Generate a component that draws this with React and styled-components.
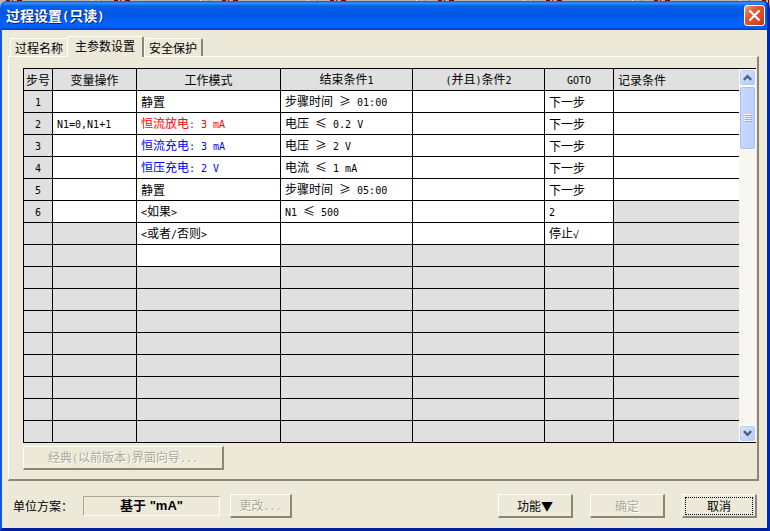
import React from 'react';
import styled, { createGlobalStyle } from 'styled-components';

const GlobalStyle = createGlobalStyle`
  * {
    box-sizing: border-box;
  }

  body {
    margin: 0;
    font-family: 'Noto Sans CJK SC', sans-serif;
    font-size: 12px;
    line-height: 16px;
    color: #000;
  }

  button {
    font: inherit;
    color: inherit;
  }
`;

// The window behind the dialog, only a sliver of it shows
const Desktop = styled.div`
  display: flex;
  flex-direction: column;
  min-height: 100vh;
  padding-top: 1px;
  background: repeating-linear-gradient(
    90deg,
    #b9b9b1 0 6px,
    #800000 6px 10px,
    #b9b9b1 10px 12px,
    #800000 12px 13px,
    #b9b9b1 13px 17px,
    #800000 17px 22px,
    #b9b9b1 22px 92px,
    #fff 92px 93px,
    #b9b9b1 93px 101px,
    #808080 101px 102px,
    #b9b9b1 102px 108px
  );
`;

const Dialog = styled.main`
  flex: 1;
  display: flex;
  flex-direction: column;
  border: solid #0a58ee;
  border-width: 0 3px 3px 2px;
  border-right-color: #0028b8;
  border-bottom-color: #001ea0;
  border-radius: 7px 7px 0 0;
  background: #0050dc;
`;

const TitleBar = styled.header`
  display: flex;
  align-items: center;
  justify-content: space-between;
  height: 29px;
  padding: 0 2px 0 4px;
  border-radius: 6px 6px 0 0;
  background: linear-gradient(#0a50d0 0%, #3a90ff 7%, #0560ee 17%, #0054e2 45%, #0064ff 75%, #0060f5 90%, #003cc4 100%);
`;

const Title = styled.h1`
  margin: 0;
  font-size: 14px;
  line-height: 20px;
  font-weight: bold;
  color: #fff;
  text-shadow: 1px 1px #0a246a;
`;

const CloseButton = styled.button`
  display: flex;
  align-items: center;
  justify-content: center;
  width: 21px;
  height: 21px;
  padding: 0;
  border: 1px solid #fff;
  border-radius: 3px;
  background: linear-gradient(135deg, #f0a088 0%, #e25a34 35%, #d8421a 80%, #b83010 100%);
`;

const Body = styled.div`
  flex: 1;
  display: flex;
  flex-direction: column;
  padding: 5px 8px 10px 6px;
  background: #ece9d8;
`;

const TabList = styled.div`
  position: relative;
  z-index: 1;
  display: flex;
  align-items: flex-end;
  height: 21px;
  padding-left: 2px;
`;

const Tab = styled.button`
  height: ${props => (props.$active ? 21 : 18)}px;
  padding: ${props => (props.$active ? '0 7px 3px' : '0 4px')};
  margin-bottom: ${props => (props.$active ? -1 : 0)}px;
  border: solid #fff;
  border-width: 1px 0 0 1px;
  border-right: ${props => (props.$edge ? '2px solid #8a8776' : '0')};
  border-radius: 2px 2px 0 0;
  background: #ece9d8;
`;

const TabPanel = styled.section`
  flex: 1;
  display: flex;
  flex-direction: column;
  align-items: flex-start;
  padding: 11px 1px 8px 14px;
  border: 1px solid #fff;
  border-right: 2px solid #8a8776;
  border-bottom: 2px solid #8a8776;
`;

const GridFrame = styled.div`
  display: flex;
  width: 100%;
  border: solid #000;
  border-width: 1px 0 1px 1px;
`;

const Grid = styled.table`
  flex: 1;
  width: 100%;
  table-layout: fixed;
  border-collapse: separate;
  border-spacing: 0;
`;

const Cell = styled.td`
  height: 22px;
  padding: 0 4px;
  border: solid #000;
  border-width: 0 1px 1px 0;
  background: ${props => (props.$off ? '#e0e0e0' : '#fff')};
  color: ${props => props.$color || '#000'};
  text-align: ${props => props.$align || 'left'};
  font-weight: normal;
  white-space: nowrap;

  &:last-child {
    border-right: 0;
  }

  tbody > tr:last-child > & {
    height: 21px;
    border-bottom: 0;
  }
`;

const HeadCell = styled(Cell)`
  padding: 0 ${props => (props.$align === 'center' ? 0 : 4)}px;
`;

const Latin = styled.span`
  font-family: 'DejaVu Sans Mono', monospace;
  font-size: ${props => props.$size || 10}px;
`;

const Sign = styled.span`
  display: inline-block;
  width: 12px;
  text-align: center;
`;

const ScrollBar = styled.div`
  display: flex;
  flex-direction: column;
  width: 17px;
  background: #f7f6f0;
`;

const ScrollButton = styled.button`
  display: flex;
  align-items: center;
  justify-content: center;
  width: 17px;
  height: 17px;
  padding: 0;
  border: 1px solid #fff;
  border-radius: 3px;
  background: linear-gradient(135deg, #dce6ff, #b4c8f6);
  box-shadow: inset 0 0 0 1px #b8cbf6;
`;

const ScrollTrack = styled.div`
  flex: 1;
`;

const ScrollThumb = styled.div`
  display: flex;
  align-items: center;
  justify-content: center;
  height: 64px;
  border: 1px solid #fff;
  border-radius: 3px;
  background: linear-gradient(90deg, #cbdafe, #bacffb);
  box-shadow: inset 0 0 0 1px #a8bff0;
`;

const PushButton = styled.button`
  width: ${props => props.$width}px;
  height: 24px;
  padding: 0;
  border: solid #fff;
  border-width: 1px 2px 2px 1px;
  border-right-color: #8a8776;
  border-bottom-color: #8a8776;
  background: #ece9d8;

  &:disabled {
    color: #aca899;
    text-shadow: 1px 1px #fff;
  }
`;

const FocusRing = styled.span`
  display: block;
  margin: 1px 2px;
  border: 1px dotted #000;
`;

const WizardButton = styled(PushButton)`
  margin-top: 3px;
`;

const Footer = styled.footer`
  display: flex;
  align-items: center;
  height: 24px;
  margin-top: 13px;
  padding: 0 2px 0 5px;
`;

const UnitLabel = styled.span`
  width: 70px;
`;

const UnitValue = styled.output`
  width: 137px;
  height: 20px;
  margin-right: 10px;
  border: 1px solid #aca899;
  border-right-color: #fff;
  border-bottom-color: #fff;
  font-family: 'Liberation Sans', 'Noto Sans CJK SC', sans-serif;
  font-size: 13px;
  line-height: 18px;
  font-weight: bold;
  text-align: center;
`;

const Actions = styled.div`
  display: flex;
  gap: 17px;
  margin-left: auto;
`;

const columns = [
  { label: '步号', width: 29 },
  { label: '变量操作', width: 84 },
  { label: '工作模式', width: 144 },
  { label: '结束条件1', width: 132 },
  { label: '(并且)条件2', width: 132 },
  { label: 'GOTO', width: 69 },
  { label: '记录条件', align: 'left' },
];

// off: indexes of the columns that cannot be edited in this row
const rows = [
  { cells: ['1', '', '静置', '步骤时间 ≥ 01:00', '', '下一步', ''] },
  { cells: ['2', 'N1=0,N1+1', '恒流放电: 3 mA', '电压 ≤ 0.2 V', '', '下一步', ''], color: '#f00' },
  { cells: ['3', '', '恒流充电: 3 mA', '电压 ≥ 2 V', '', '下一步', ''], color: '#00f' },
  { cells: ['4', '', '恒压充电: 2 V', '电流 ≤ 1 mA', '', '下一步', ''], color: '#00f' },
  { cells: ['5', '', '静置', '步骤时间 ≥ 05:00', '', '下一步', ''] },
  { cells: ['6', '', '<如果>', 'N1 ≤ 500', '', '2', ''], off: [6] },
  { cells: ['', '', '<或者/否则>', '', '', '停止√', ''], off: [1, 6] },
  { cells: ['', '', '', '', '', '', ''], off: [1, 3, 4, 5, 6] },
];

const emptyRow = { cells: ['', '', '', '', '', '', ''], off: [1, 2, 3, 4, 5, 6] };
const allRows = [...rows, ...Array(8).fill(emptyRow)];

// Latin runs take half the width of a Chinese character, signs the full width
const mixed = (text, size) =>
  text.split(/([≥≤]|[√\x20-\x7e]+)/).map((part, i) => {
    if (/^[≥≤]$/.test(part)) return <Sign key={i}>{part}</Sign>;
    if (/^[√\x20-\x7e]+$/.test(part)) return <Latin key={i} $size={size}>{part}</Latin>;
    return part;
  });

const Chevron = ({ down }) => (
  <svg width="9" height="7" viewBox="0 0 9 7" aria-hidden="true">
    <path d={down ? 'M.8 1.2l3.7 3.7 3.7-3.7' : 'M.8 5.8l3.7-3.7 3.7 3.7'} fill="none" stroke="#4d6185" strokeWidth="2.4" />
  </svg>
);

const StepGrid = () => (
  <GridFrame>
    <Grid>
      <colgroup>
        {columns.map(col => (
          <col key={col.label} width={col.width} />
        ))}
      </colgroup>
      <thead>
        <tr>
          {columns.map(col => (
            <HeadCell as="th" scope="col" key={col.label} $off $align={col.align || 'center'}>
              {mixed(col.label)}
            </HeadCell>
          ))}
        </tr>
      </thead>
      <tbody>
        {allRows.map((row, r) => (
          <tr key={r}>
            {row.cells.map((text, c) => (
              <Cell
                key={c}
                $off={c === 0 || (row.off || []).includes(c)}
                $align={c === 0 ? 'center' : 'left'}
                $color={c === 2 ? row.color : undefined}
              >
                {mixed(text)}
              </Cell>
            ))}
          </tr>
        ))}
      </tbody>
    </Grid>
    <ScrollBar>
      <ScrollButton aria-label="向上滚动">
        <Chevron />
      </ScrollButton>
      <ScrollTrack>
        <ScrollThumb>
          <svg width="8" height="8" viewBox="0 0 8 8" aria-hidden="true">
            <path d="M0 .5h7M0 2.5h7M0 4.5h7M0 6.5h7" stroke="#eef4fe" />
            <path d="M1 1.5h7M1 3.5h7M1 5.5h7M1 7.5h7" stroke="#8cb0f8" />
          </svg>
        </ScrollThumb>
      </ScrollTrack>
      <ScrollButton aria-label="向下滚动">
        <Chevron down />
      </ScrollButton>
    </ScrollBar>
  </GridFrame>
);

const App = () => (
  <Desktop>
    <GlobalStyle />
    <Dialog>
      <TitleBar>
        <Title>{mixed('过程设置(只读)', 12)}</Title>
        <CloseButton aria-label="关闭">
          <svg width="13" height="13" viewBox="0 0 13 13" aria-hidden="true">
            <path d="M1.5 1.5l10 10M11.5 1.5l-10 10" stroke="#fff" strokeWidth="2.2" />
          </svg>
        </CloseButton>
      </TitleBar>
      <Body>
        <TabList role="tablist">
          <Tab role="tab" aria-selected="false">过程名称</Tab>
          <Tab role="tab" aria-selected="true" $active $edge>主参数设置</Tab>
          <Tab role="tab" aria-selected="false" $edge>安全保护</Tab>
        </TabList>
        <TabPanel role="tabpanel">
          <StepGrid />
          <WizardButton disabled $width={201}>{mixed('经典(以前版本)界面向导...')}</WizardButton>
        </TabPanel>
        <Footer>
          <UnitLabel id="unit">单位方案：</UnitLabel>
          <UnitValue aria-labelledby="unit">基于 "mA"</UnitValue>
          <PushButton disabled $width={62}>{mixed('更改...')}</PushButton>
          <Actions>
            <PushButton $width={75}>功能▼</PushButton>
            <PushButton disabled $width={75}>确定</PushButton>
            <PushButton $width={75}>
              <FocusRing>取消</FocusRing>
            </PushButton>
          </Actions>
        </Footer>
      </Body>
    </Dialog>
  </Desktop>
);

export default App;
